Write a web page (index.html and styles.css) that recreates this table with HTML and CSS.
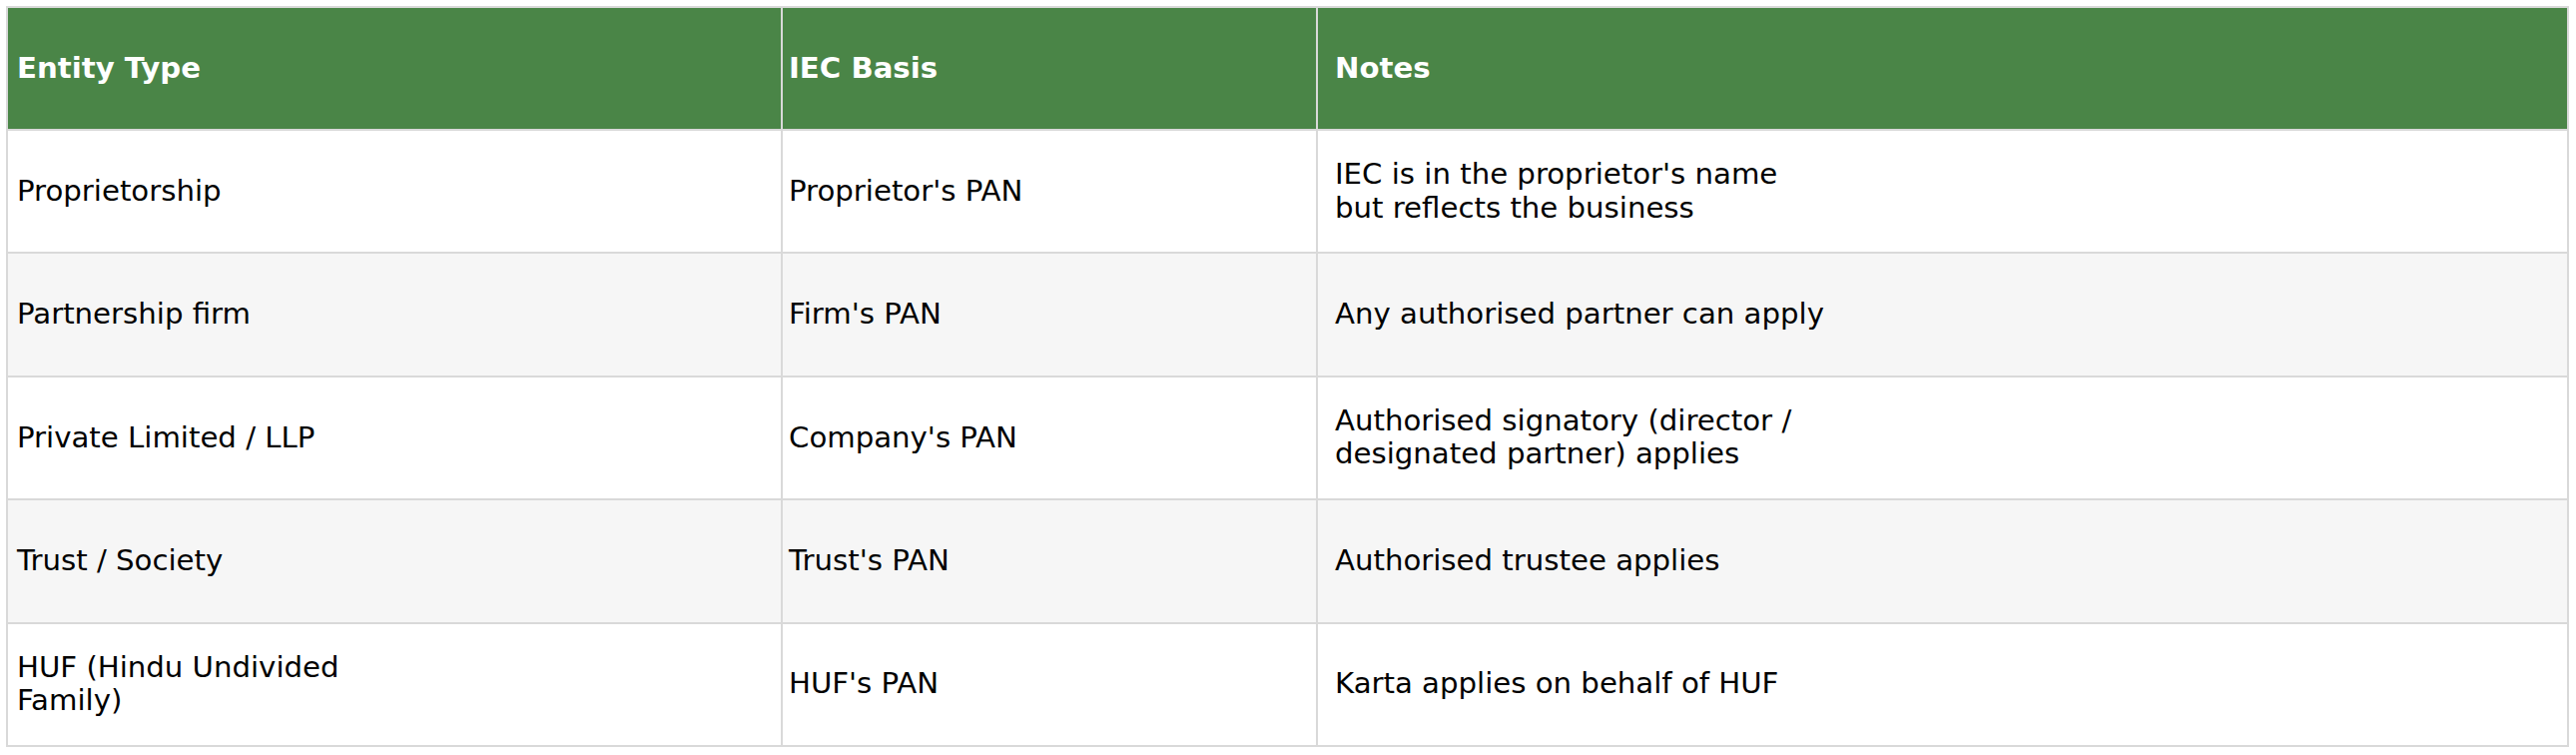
FILE: index.html
```html
<!DOCTYPE html>
<html>
<head>
<meta charset="utf-8">
<link rel="stylesheet" href="styles.css">
</head>
<body>
<table class="grid">
  <colgroup>
    <col class="c1">
    <col class="c2">
    <col class="c3">
  </colgroup>
  <thead>
    <tr class="head">
      <th class="p1">Entity Type</th>
      <th class="p2">IEC Basis</th>
      <th class="p3">Notes</th>
    </tr>
  </thead>
  <tbody>
    <tr class="row">
      <td class="p1">Proprietorship</td>
      <td class="p2">Proprietor's PAN</td>
      <td class="p3">IEC is in the proprietor's name<br>but reflects the business</td>
    </tr>
    <tr class="row alt">
      <td class="p1">Partnership firm</td>
      <td class="p2">Firm's PAN</td>
      <td class="p3">Any authorised partner can apply</td>
    </tr>
    <tr class="row">
      <td class="p1">Private Limited / LLP</td>
      <td class="p2">Company's PAN</td>
      <td class="p3">Authorised signatory (director /<br>designated partner) applies</td>
    </tr>
    <tr class="row alt">
      <td class="p1">Trust / Society</td>
      <td class="p2">Trust's PAN</td>
      <td class="p3">Authorised trustee applies</td>
    </tr>
    <tr class="row">
      <td class="p1">HUF (Hindu Undivided<br>Family)</td>
      <td class="p2">HUF's PAN</td>
      <td class="p3">Karta applies on behalf of HUF</td>
    </tr>
  </tbody>
</table>
</body>
</html>
```
FILE: styles.css
```css
html, body {
  margin: 0;
  padding: 0;
  background: #ffffff;
}
body {
  padding: 6px 6px 0 6px;
  font-family: "DejaVu Sans", Verdana, sans-serif;
  font-size: 29.2px;
  color: #000000;
}
.grid {
  border-collapse: collapse;
  width: 2567px;
  table-layout: fixed;
}
.c1 { width: 776px; }
.c2 { width: 536px; }
.c3 { width: auto; }
.grid th,
.grid td {
  border: 2px solid #d9d9d9;
  text-align: left;
  vertical-align: middle;
  padding-top: 0;
  padding-bottom: 0;
  padding-right: 8px;
  line-height: 1.15;
}
.grid th {
  background: #4a8547;
  color: #ffffff;
  font-weight: bold;
}
.head { height: 123px; }
.row { height: 123.4px; }
.row td { background: #ffffff; }
.alt td { background: #f6f6f6; }
.p1 { padding-left: 9px; }
.p2 { padding-left: 6px; }
.p3 { padding-left: 17px; }
```
